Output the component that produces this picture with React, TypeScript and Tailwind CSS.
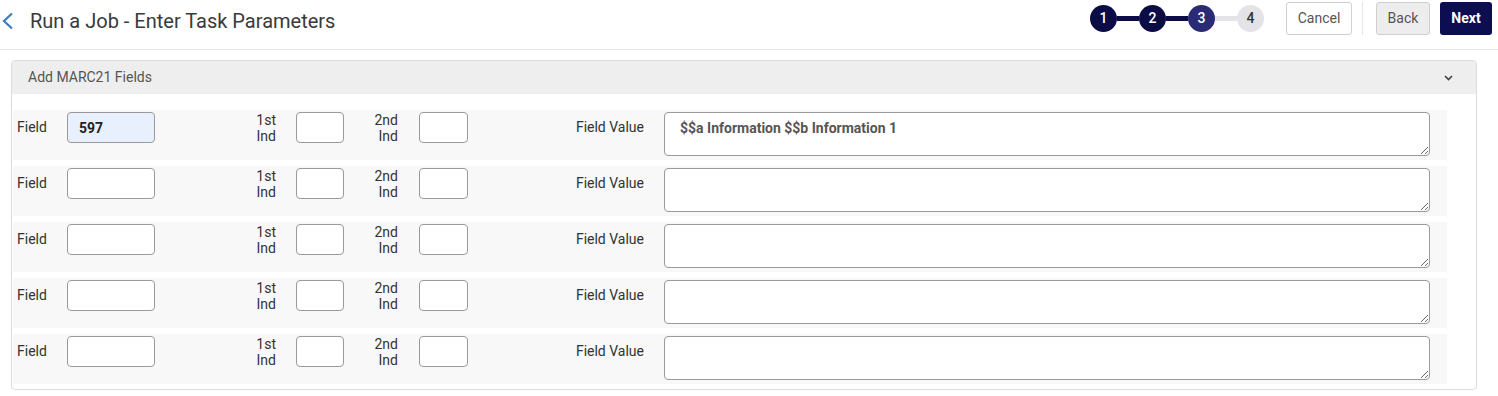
import React from 'react';

const font = { fontFamily: 'Roboto, "Liberation Sans", Arial, sans-serif' };

function Step({ n, state }: { n: number; state: 'done' | 'current' | 'todo' }) {
    const cls =
        state === 'done'
            ? 'bg-[#0b0b46] text-white'
            : state === 'current'
            ? 'bg-[#2b2b75] text-white'
            : 'bg-[#e4e4e8] text-[#333]';
    return (
        <div className={`w-[27px] h-[27px] rounded-full flex items-center justify-center text-[14px] font-medium ${cls}`}>
            {n}
        </div>
    );
}

function FieldRow({ field = '', value = '' }: { field?: string; value?: string }) {
    return (
        <div className="flex items-start h-[50px] pt-[2px] bg-[#f8f8f8] text-[14px] text-[#333]">
            <div className="w-[54px] h-[31px] pl-[4px] flex items-center">Field</div>
            <input
                readOnly
                value={field}
                className={`w-[88px] h-[31px] border border-[#9a9a9a] rounded-[4px] px-[11px] font-bold text-[#222] outline-none ${field ? 'bg-[#e8f0fe]' : 'bg-white'}`}
            />
            <div className="w-[141px] pr-[20px] text-right leading-[16px]">
                1st
                <br />
                Ind
            </div>
            <input readOnly className="w-[48px] h-[31px] border border-[#9a9a9a] rounded-[4px] bg-white outline-none" />
            <div className="w-[75px] pr-[21px] text-right leading-[16px]">
                2nd
                <br />
                Ind
            </div>
            <input readOnly className="w-[49px] h-[31px] border border-[#9a9a9a] rounded-[4px] bg-white outline-none" />
            <div className="w-[196px] h-[31px] pr-[20px] flex items-center justify-end">Field Value</div>
            <textarea
                readOnly
                value={value}
                className="w-[766px] h-[44px] border border-[#9a9a9a] rounded-[4px] bg-white px-[15px] pt-[5px] font-bold text-[#555] outline-none"
            />
        </div>
    );
}

export default function App() {
    return (
        <div className="bg-white w-[1498px] h-[396px]" style={font}>
            {/* Header */}
            <div className="h-[50px] flex items-center border-b border-[#e6e6e6]">
                <div className="h-[42px] flex items-center -mt-[8px]">
                    <svg width="13" height="18" viewBox="0 0 13 18" className="ml-[1px]">
                        <path d="M11 1.5 L3 9 L11 16.5" fill="none" stroke="#3a7fc1" strokeWidth="2.2" />
                    </svg>
                    <h1 className="ml-[16px] text-[20px] text-[#3a3a3a] font-normal">Run a Job - Enter Task Parameters</h1>
                </div>

                <div className="ml-auto flex items-center -mt-[13px]">
                    <Step n={1} state="done" />
                    <div className="w-[22px] h-[5px] bg-[#0b0b46]" />
                    <Step n={2} state="done" />
                    <div className="w-[22px] h-[5px] bg-[#0b0b46]" />
                    <Step n={3} state="current" />
                    <div className="w-[22px] h-[5px] bg-[#e4e4e8]" />
                    <Step n={4} state="todo" />
                </div>

                <div className="flex items-center ml-[22px] mr-[6px] -mt-[13px]">
                    <button className="w-[66px] h-[33px] border border-[#d0d0d0] rounded-[3px] bg-white text-[14px] text-[#555]">
                        Cancel
                    </button>
                    <div className="w-px h-[33px] bg-[#e6e6e6] mx-[10px]" />
                    <button className="w-[54px] h-[33px] ml-[3px] border border-[#cfcfcf] rounded-[3px] bg-[#ededed] text-[14px] text-[#555]">
                        Back
                    </button>
                    <button className="w-[52px] h-[33px] ml-[10px] rounded-[3px] bg-[#0d0d52] text-[14px] font-bold text-white">
                        Next
                    </button>
                </div>
            </div>

            {/* Panel */}
            <div className="mx-[11px] mt-[10px] w-[1466px] h-[330px] border border-[#dcdcdc] rounded-[4px]">
                <div className="h-[33px] bg-[#eeeeee] rounded-t-[4px] flex items-center justify-between pl-[16px] pr-[23px]">
                    <span className="text-[14px] text-[#555]">Add MARC21 Fields</span>
                    <svg width="9" height="6" viewBox="0 0 9 6">
                        <path d="M1 1 L4.5 4.5 L8 1" fill="none" stroke="#444" strokeWidth="1.7" />
                    </svg>
                </div>
                <div className="pt-[16px] pl-[1px] w-[1435px] flex flex-col gap-[6px]">
                    <FieldRow field="597" value="$$a Information $$b Information 1" />
                    <FieldRow />
                    <FieldRow />
                    <FieldRow />
                    <FieldRow />
                </div>
            </div>
        </div>
    );
}
